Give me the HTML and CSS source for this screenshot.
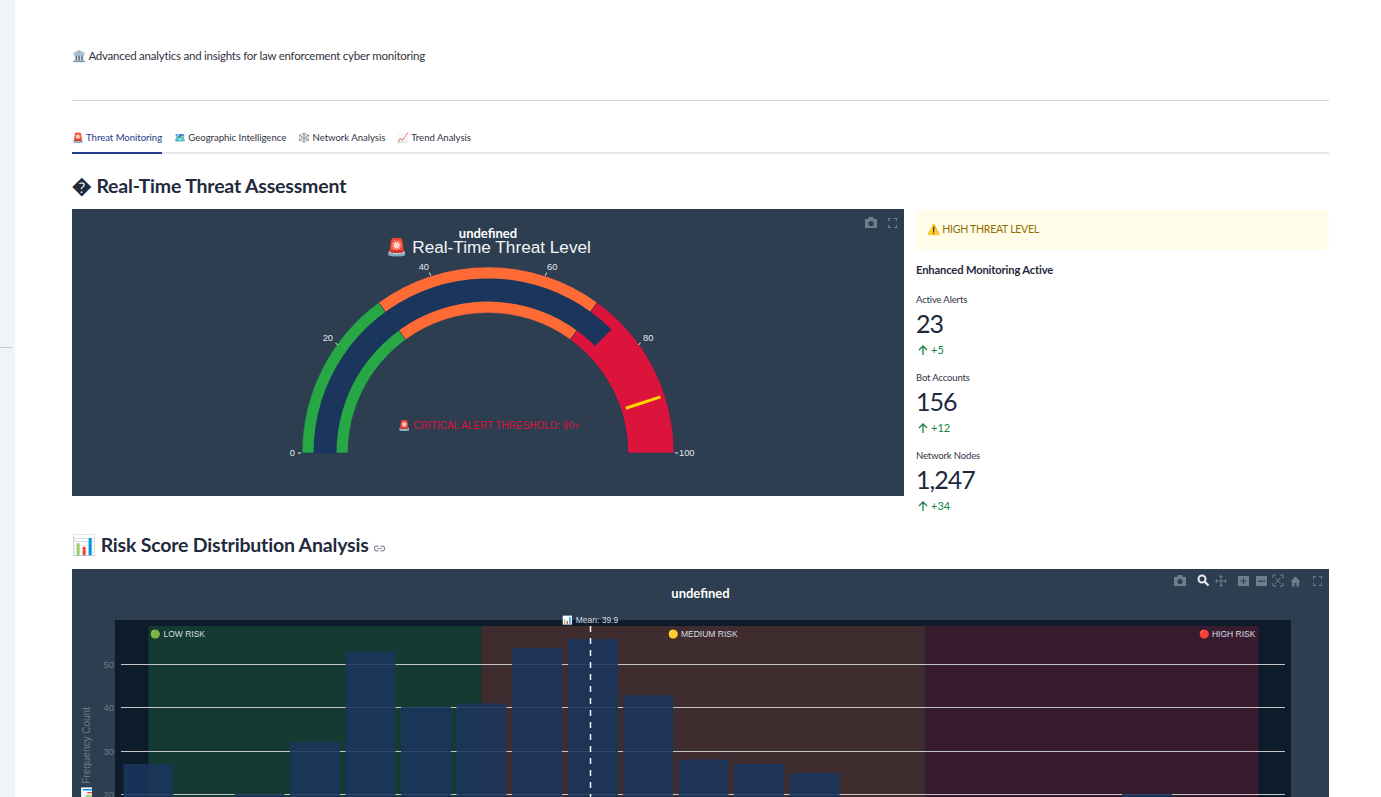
FILE: index.html
```html
<!DOCTYPE html>
<html lang="en">
<head>
<meta charset="utf-8">
<title>Threat Analytics</title>
<link rel="stylesheet" href="styles.css">
</head>
<body>
<div class="app">
  <aside class="rail"><div class="rail-mark"></div></aside>
  <main class="main">
    <p class="tagline">🏛️ Advanced analytics and insights for law enforcement cyber monitoring</p>
    <hr class="rule">
    <nav class="tabs">
      <span class="tab active">🚨 Threat Monitoring</span>
      <span class="tab">🗺️ Geographic Intelligence</span>
      <span class="tab">🕸️ Network Analysis</span>
      <span class="tab">📈 Trend Analysis</span>
    </nav>
    <h2 class="h-first">� Real-Time Threat Assessment</h2>
    <section class="split">
      <div class="chart gauge-card">
        <svg class="tools" width="40" height="14" viewBox="0 0 40 14">
          <g fill="#6f7e8d">
            <path d="M1 3h3l1-2h4l1 2h3v9H1zM7 5a2.600 2.600 0 1 0 0 5.200A2.600 2.600 0 0 0 7 5z"/>
            <path d="M24 2h3v1h-2v2h-1zM30 2h3v3h-1V3h-2zM24 9h1v2h2v1h-3zM32 9h1v3h-3v-1h2z"/>
          </g>
        </svg>
        <svg class="plot" width="832" height="287" viewBox="72 209 832 287">
          <g stroke="#1a365d" stroke-width=".5">
            <path fill="#28a745" d="M302 453A186 186 0 0 1 378.700 302.500L405.700 339.700A140 140 0 0 0 348 453Z"/>
            <path fill="#ff6b35" d="M378.700 302.500A186 186 0 0 1 597.300 302.500L570.300 339.700A140 140 0 0 0 405.700 339.700Z"/>
            <path fill="#dc143c" d="M597.300 302.500A186 186 0 0 1 674 453H628A140 140 0 0 0 570.300 339.700Z"/>
          </g>
          <path fill="#1a365d" d="M313.500 453A174.500 174.500 0 0 1 611.400 329.600L595.100 345.900A151.500 151.500 0 0 0 336.500 453Z"/>
          <line class="threshold" x1="625.800" y1="408.200" x2="660.500" y2="396.900"/>
          <g class="ticks">
            <path d="M298 453h3M335.300 342.900l2.500 1.900M429.500 272.600l1 3M546.500 272.600l-1 3M640.700 342.900l-2.500 1.900M675 453h3"/>
          </g>
          <g class="tick-text">
            <text x="295" y="456" text-anchor="end">0</text>
            <text x="333" y="341" text-anchor="end">20</text>
            <text x="429" y="269.500" text-anchor="end">40</text>
            <text x="547" y="269.500">60</text>
            <text x="643" y="341">80</text>
            <text x="679" y="456">100</text>
          </g>
          <text class="undefined" x="488" y="238" text-anchor="middle">undefined</text>
          <text class="gauge-title" x="488.500" y="253" text-anchor="middle">🚨 Real-Time Threat Level</text>
          <text class="crit" x="489" y="429" text-anchor="middle">🚨 CRITICAL ALERT THRESHOLD: 90+</text>
        </svg>
      </div>
      <div class="side">
        <div class="alert">⚠️ HIGH THREAT LEVEL</div>
        <p class="strong">Enhanced Monitoring Active</p>
        <div class="metric">
          <div class="m-label">Active Alerts</div>
          <div class="m-value">23</div>
          <div class="m-delta"><svg width="12" height="12" viewBox="0 0 12 12"><path d="M6 11V2M2 6l4-4 4 4"/></svg>+5</div>
        </div>
        <div class="metric">
          <div class="m-label">Bot Accounts</div>
          <div class="m-value">156</div>
          <div class="m-delta"><svg width="12" height="12" viewBox="0 0 12 12"><path d="M6 11V2M2 6l4-4 4 4"/></svg>+12</div>
        </div>
        <div class="metric">
          <div class="m-label">Network Nodes</div>
          <div class="m-value">1,247</div>
          <div class="m-delta"><svg width="12" height="12" viewBox="0 0 12 12"><path d="M6 11V2M2 6l4-4 4 4"/></svg>+34</div>
        </div>
      </div>
    </section>
    <h2 class="h-second">📊 Risk Score Distribution Analysis <svg class="link" width="13" height="13" viewBox="0 0 14 14"><path d="M6 4.500H4a2.500 2.500 0 0 0 0 5h2M8 4.500h2a2.500 2.500 0 0 1 0 5H8M4.500 7h5"/></svg></h2>
    <div class="chart hist-card">
      <svg class="plot" width="1257" height="300" viewBox="72 569 1257 300">
        <rect x="115" y="620" width="1176" height="249" fill="#0e1b2a"/>
        <rect x="148.500" y="626" width="333" height="243" fill="#153a31"/>
        <rect x="481.500" y="626" width="444" height="243" fill="#3f2c2f"/>
        <rect x="925.500" y="626" width="333" height="243" fill="#371c2f"/>
        <g class="grid">
          <line x1="121" x2="1285" y1="664.500" y2="664.500"/>
          <line x1="121" x2="1285" y1="707.500" y2="707.500"/>
          <line x1="121" x2="1285" y1="751.500" y2="751.500"/>
          <line x1="121" x2="1285" y1="794.500" y2="794.500"/>
        </g>
        <g class="bars">
          <rect x="123.500" y="764" width="50" height="105"/>
          <rect x="234.500" y="794" width="50" height="75"/>
          <rect x="290" y="742" width="50" height="127"/>
          <rect x="345.500" y="652" width="50" height="217"/>
          <rect x="401" y="707" width="50" height="162"/>
          <rect x="456.500" y="703.500" width="50" height="165.500"/>
          <rect x="512" y="648" width="50" height="221"/>
          <rect x="568" y="639" width="50" height="230"/>
          <rect x="623" y="695" width="50" height="174"/>
          <rect x="678.500" y="759.500" width="50" height="109.500"/>
          <rect x="734" y="764" width="50" height="105"/>
          <rect x="789.500" y="773" width="50" height="96"/>
          <rect x="1122" y="794" width="50" height="75"/>
        </g>
        <line class="mean" x1="590.500" x2="590.500" y1="626" y2="869"/>
        <g class="y-ticks">
          <text x="114" y="668" text-anchor="end">50</text>
          <text x="114" y="711" text-anchor="end">40</text>
          <text x="114" y="755" text-anchor="end">30</text>
          <text x="114" y="798" text-anchor="end">20</text>
        </g>
        <text class="y-title" transform="translate(90 799) rotate(-90)">📊 Frequency Count</text>
        <text class="undefined" x="700.500" y="598" text-anchor="middle">undefined</text>
        <g class="notes">
          <text x="590.500" y="623" text-anchor="middle">📊 Mean: 39.9</text>
          <text x="150.500" y="637">🟢 LOW RISK</text>
          <text x="668" y="637">🟡 MEDIUM RISK</text>
          <text x="1199" y="637">🔴 HIGH RISK</text>
        </g>
      </svg>
      <svg class="tools tools-wide" width="154" height="14" viewBox="0 0 154 14">
        <g fill="#6f7e8d">
          <path d="M1 3h3l1-2h4l1 2h3v9H1zM7 5a2.600 2.600 0 1 0 0 5.200A2.600 2.600 0 0 0 7 5z"/>
          <path transform="translate(2 0)" d="M46 1l2 2h-1.500v3.500H50V5l2 2-2 2V7.500h-3.500V11H48l-2 2-2-2h1.500V7.500H42V9l-2-2 2-2v1.500h3.500V3H44z"/>
          <path transform="translate(2 1)" fill-rule="evenodd" d="M63 1h11v10H63zM68 3v2.500H65.500v1H68V9h1V6.500h2.500v-1H69V3z"/>
          <path transform="translate(2 1)" fill-rule="evenodd" d="M81 1h11v10H81zM83 5.500v1.200h7V5.500z"/>
          <path transform="translate(8 1)" d="M109.500 6.500l5-5 5 5h-1.500v5h-2.500V8h-2v3.500h-2.500v-5z"/>
          <path transform="translate(6 0)" d="M134 2h3v1h-2v2h-1zM140 2h3v3h-1V3h-2zM134 9h1v2h2v1h-3zM142 9h1v3h-3v-1h2z"/>
        </g>
        <path transform="translate(3 0)" d="M97 4V1h3M107 4V1h-3M97 9v3h3M107 9v3h-3M99.500 3.500l5 6M104.500 3.500l-5 6" fill="none" stroke="#6f7e8d" stroke-width="1"/>
        <circle cx="29" cy="5" r="3.500" fill="none" stroke="#e8edf2" stroke-width="2"/>
        <path d="M31.500 7.500l4 4" stroke="#e8edf2" stroke-width="2.200"/>
      </svg>
    </div>
  </main>
</div>
</body>
</html>
```
FILE: styles.css
```css
* { box-sizing: border-box; }
html, body { margin: 0; height: 100%; overflow: hidden; background: #fff; }
body { font-family: "Lato", "Noto Color Emoji", sans-serif; color: #1f2a3c; }
.app { display: flex; height: 797px; overflow: hidden; }
.rail { flex: 0 0 15px; background: #f0f4f9; padding-top: 347px; }
.rail-mark { height: 1px; width: 12px; background: #c9ccd1; }
.main { flex: 1; min-width: 0; padding: 48px 52px 0 57px; }
.tagline { margin: 0; font-size: 11.500px; letter-spacing: -.24px; line-height: 16px; color: #31333f; }
.rule { margin: 36px 0 0; border: 0; height: 1px; background: #d2d3d6; }
.tabs { display: flex; gap: 12px; margin-top: 29px; height: 24px; border-bottom: 2px solid #e6e7ea; }
.tab { font-size: 9.600px; letter-spacing: -.04px; line-height: 15px; color: #31333f; height: 24px; white-space: nowrap; }
.tab.active { color: #1e3a8a; border-bottom: 2px solid #1e3a8a; width: 90px; }
h2 { margin: 0; font-weight: 700; color: #1f2a3c; white-space: nowrap; }
.h-first { font-size: 19.500px; letter-spacing: -.18px; line-height: 26px; margin-top: 19px; height: 36px; }
.h-second { font-size: 19.500px; letter-spacing: -.19px; line-height: 24px; margin-top: 12px; height: 36px; }
.link { fill: none; stroke: #8a8d94; stroke-width: 1.200; vertical-align: -3px; }
.split { display: flex; gap: 12px; align-items: flex-start; height: 312px; }
.chart { position: relative; background: #2d3e50; overflow: hidden; }
.gauge-card { flex: 0 0 832px; height: 287px; }
.plot { display: block; }
.tools { position: absolute; top: 7px; right: 0; }
.tools-wide { right: 2px; top: 5px; }
.threshold { stroke: #ffd700; stroke-width: 3; }
.ticks path { stroke: #e8ecf0; stroke-width: 1; fill: none; }
.tick-text text { font: 9.300px "Liberation Sans", sans-serif; fill: #e3e8ee; }
.undefined { font: 700 13px "Lato", sans-serif; fill: #fff; }
.gauge-title { font: 17.200px "Liberation Sans", "Noto Color Emoji", sans-serif; fill: #f2f5f8; }
.crit { font: 10px "Liberation Sans", "Noto Color Emoji", sans-serif; fill: #dc143c; }
.side { flex: 1; min-width: 0; }
.alert { height: 40px; margin-top: 1px; border-radius: 7px; background: #fffce7; color: #926c05; font-size: 10.600px; letter-spacing: -.3px; line-height: 38px; padding-left: 11px; }
.strong { margin: 12px 0 0; font-size: 11.200px; letter-spacing: -.15px; line-height: 15px; font-weight: 700; color: #1f2a3c; }
.metric { height: 78px; padding-top: 16px; }
.m-label { font-size: 9.500px; letter-spacing: -.15px; line-height: 14px; color: #31333f; }
.m-value { font-size: 25px; letter-spacing: -1px; line-height: 34px; margin-top: -1px; color: #1f2a3c; }
.m-delta { display: flex; align-items: center; gap: 2px; font-size: 11px; line-height: 14px; color: #1a8045; margin-top: 3px; padding-left: 1px; }
.m-delta svg { fill: none; stroke: #1a8045; stroke-width: 1.300; }
.hist-card { height: 300px; }
.grid line { stroke: #c6c5c9; stroke-width: 1; }
.bars rect { fill: #1a365d; fill-opacity: .88; }
.mean { stroke: #f2f2f2; stroke-width: 1.500; stroke-dasharray: 6 6; }
.y-ticks text { font: 9.500px "Liberation Sans", sans-serif; fill: #6f7c8a; }
.y-title { font: 10px "Liberation Sans", "Noto Color Emoji", sans-serif; fill: #6f7c8a; }
.notes text { font: 8.500px "Liberation Sans", "Noto Color Emoji", sans-serif; fill: #d8dde3; }
```
